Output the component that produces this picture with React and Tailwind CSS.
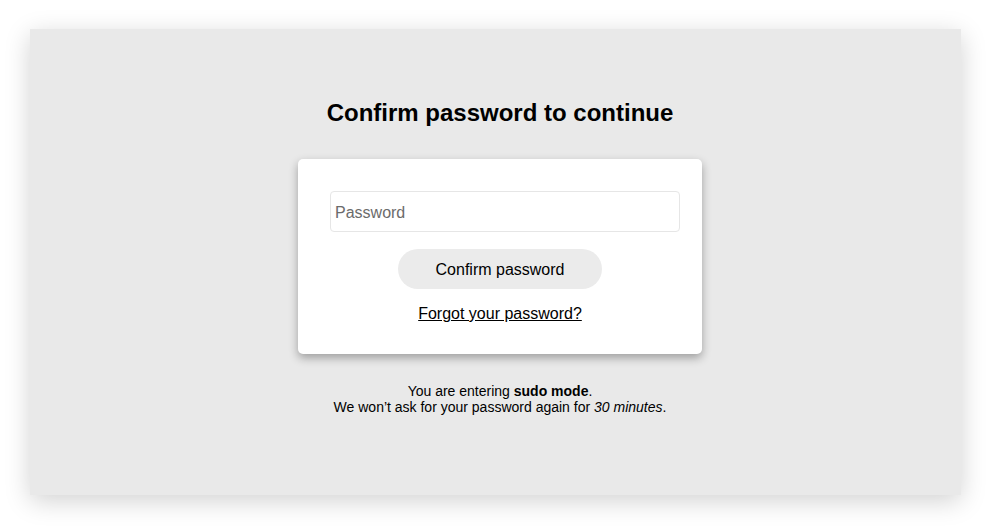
export default function App() {
  return (
    <div className="h-[527px] w-full bg-white pl-[30px] pt-[29px] font-['Liberation_Sans',Arial,sans-serif] text-black">
      <div className="flex h-[466px] w-[931px] flex-col items-center bg-[#e9e9e9] pl-[9px] pt-[70px] shadow-[0_6px_24px_rgba(0,0,0,0.18)]">
        <h1 className="text-[24px] font-bold leading-[28px]">Confirm password to continue</h1>

        <div className="mt-[32px] flex h-[195px] w-[404px] flex-col items-start rounded-[5px] bg-white pl-[32px] pt-[32px] shadow-[0_4px_10px_rgba(0,0,0,0.32)]">
          <input
            type="password"
            placeholder="Password"
            className="h-[41px] w-[350px] rounded-[4px] border border-[#e6e6e6] bg-white px-[4px] pt-[2px] text-[16px] text-black outline-none placeholder:text-[#6b6b6b]"
          />
          <div className="flex w-[340px] flex-col items-center">
            <button className="mt-[17px] h-[40px] w-[204px] rounded-full bg-[#ebebeb] pt-[2px] text-[16px] leading-[20px] text-black">
              Confirm password
            </button>
            <a href="#" className="mt-[16px] text-[16px] leading-[18px] text-black underline">
              Forgot your password?
            </a>
          </div>
        </div>

        <div className="mt-[29px] text-center text-[14px] leading-[16px]">
          <p>
            You are entering <strong>sudo mode</strong>.
          </p>
          <p>
            We won’t ask for your password again for <em>30 minutes</em>.
          </p>
        </div>
      </div>
    </div>
  )
}
